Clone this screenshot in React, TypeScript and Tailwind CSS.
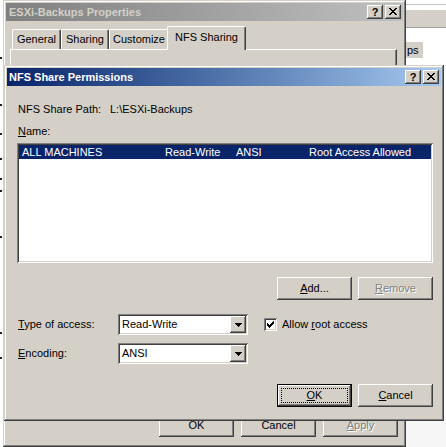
import React from "react";

// Classic 3D bevels
const raised =
  "shadow-[inset_-1px_-1px_#404040,inset_1px_1px_#ffffff,inset_-2px_-2px_#808080,inset_2px_2px_#d4d0c8]";
const frame =
  "shadow-[inset_-1px_-1px_#404040,inset_1px_1px_#d4d0c8,inset_-2px_-2px_#808080,inset_2px_2px_#ffffff]";
const sunken =
  "shadow-[inset_1px_1px_#808080,inset_-1px_-1px_#ffffff,inset_2px_2px_#404040,inset_-2px_-2px_#d4d0c8]";

function CloseGlyph() {
  return (
    <svg width="8" height="7" viewBox="0 0 8 7" shapeRendering="crispEdges">
      <path
        fill="#000"
        d="M0 0h2v1H0z M6 0h2v1H6z M1 1h2v1H1z M5 1h2v1H5z M2 2h4v1H2z M3 3h2v1H3z M2 4h4v1H2z M1 5h2v1H1z M5 5h2v1H5z M0 6h2v1H0z M6 6h2v1H6z"
      />
    </svg>
  );
}

function CaptionButtons() {
  return (
    <div className="ml-auto flex gap-[2px]">
      <div className={`w-[16px] h-[14px] bg-[#d4d0c8] ${raised} flex items-center justify-center`}>
        <span className="text-black font-bold text-[11px] leading-none">?</span>
      </div>
      <div className={`w-[16px] h-[14px] bg-[#d4d0c8] ${raised} flex items-center justify-center pb-px`}>
        <CloseGlyph />
      </div>
    </div>
  );
}

function Button({
  children,
  isDefault = false,
  disabled = false,
}: {
  children: React.ReactNode;
  isDefault?: boolean;
  disabled?: boolean;
}) {
  const label = (
    <span
      className={
        disabled
          ? "text-[#808080] [text-shadow:1px_1px_0_#ffffff]"
          : "text-black"
      }
    >
      {children}
    </span>
  );
  if (isDefault) {
    return (
      <div className="w-[75px] h-[23px] border border-black">
        <div className={`w-full h-full bg-[#d4d0c8] ${raised} p-[3px]`}>
          <div className="w-full h-full border border-dotted border-black flex items-center justify-center">
            {label}
          </div>
        </div>
      </div>
    );
  }
  return (
    <div className={`w-[75px] h-[23px] bg-[#d4d0c8] ${raised} flex items-center justify-center`}>
      {label}
    </div>
  );
}

function ComboBox({ value }: { value: string }) {
  return (
    <div className={`w-[130px] h-[21px] bg-white ${sunken} p-[2px] flex`}>
      <div className="flex-1 pl-[2px] flex items-center">{value}</div>
      <div className={`w-[16px] h-full bg-[#d4d0c8] ${raised} flex items-center justify-center`}>
        <svg width="7" height="4" viewBox="0 0 7 4" shapeRendering="crispEdges">
          <path fill="#000" d="M0 0h7v1H0z M1 1h5v1H1z M2 2h3v1H2z M3 3h1v1H3z" />
        </svg>
      </div>
    </div>
  );
}

function CheckBox() {
  return (
    <div className={`w-[13px] h-[13px] bg-white ${sunken} flex items-center justify-center`}>
      <svg width="7" height="7" viewBox="0 0 7 7" shapeRendering="crispEdges">
        <path
          fill="#000"
          d="M0 2h1v3H0z M1 3h1v3H1z M2 4h1v3H2z M3 3h1v3H3z M4 2h1v3H4z M5 1h1v3H5z M6 0h1v3H6z"
        />
      </svg>
    </div>
  );
}

function Tab({ label, w, selected = false }: { label: string; w: string; selected?: boolean }) {
  if (selected) {
    return (
      <div
        className={`${w} relative z-10 -mx-[2px] -mb-px h-[24px] bg-[#d4d0c8] border-l border-t border-white border-r border-r-[#404040] rounded-t-[2px] shadow-[inset_-1px_0_#808080] flex items-start justify-center pt-[4px]`}
      >
        {label}
      </div>
    );
  }
  return (
    <div
      className={`${w} h-[20px] bg-[#d4d0c8] border-l border-t border-white border-r border-r-[#404040] rounded-t-[2px] shadow-[inset_-1px_0_#808080] flex items-start justify-center pt-[3px]`}
    >
      {label}
    </div>
  );
}

function DesktopBits() {
  const specks = [57, 104, 133, 158, 178, 190, 236, 332, 357];
  return (
    <>
      {specks.map((y) => (
        <div key={y} className="absolute left-0 w-[2px] h-[2px] bg-[#202020]" style={{ top: y }} />
      ))}
      {/* window peeking out at the right */}
      <div className="absolute left-[406px] top-[4px] w-[40px] h-px bg-[#c4c4c4]" />
      <div className="absolute left-[406px] top-[9px] w-[40px] h-[19px] bg-[#d4d0c8] border-t border-white border-b border-b-[#a0a0a0]" />
      <div className="absolute left-[406px] top-[42px] w-[17px] h-[16px] bg-[#d4d0c8] pl-px leading-[16px]">
        ps
      </div>
      <div className="absolute left-[406px] top-[421px] w-[40px] h-[26px] bg-[#f6f6f6]" />
    </>
  );
}

function PropertiesWindow() {
  return (
    <div className={`absolute left-[3px] top-0 w-[403px] h-[447px] bg-[#d4d0c8] ${frame} p-[3px] flex flex-col`}>
      <div className="h-[18px] bg-linear-to-r from-[#808080] to-[#c0c0c0] flex items-center pl-[3px] pr-[2px]">
        <span className="font-bold text-[#d4d0c8]">ESXi-Backups Properties</span>
        <CaptionButtons />
      </div>
      <div className="mt-[5px] h-[23px] flex items-end pl-[6px]">
        <Tab label="General" w="w-[49px]" />
        <Tab label="Sharing" w="w-[48px]" />
        <Tab label="Customize" w="w-[60px]" />
        <Tab label="NFS Sharing" w="w-[79px]" selected />
      </div>
      <div className="flex-1 ml-[4px] mr-[6px] border-l border-t border-white border-r border-r-[#404040] shadow-[inset_-1px_0_#808080] relative">
        <div className="absolute left-[23px] top-[15px] w-[7px] h-px bg-[#606060]" />
      </div>
      <div className="mt-[7px] mb-[7px] flex justify-end gap-[7px] pr-[5px]">
        <Button>OK</Button>
        <Button>Cancel</Button>
        <Button disabled>
          <u>A</u>pply
        </Button>
      </div>
    </div>
  );
}

function NfsDialog() {
  return (
    <div className={`absolute left-[4px] top-[65px] w-[440px] h-[356px] bg-[#d4d0c8] ${frame} p-[3px] flex flex-col`}>
      <div className="h-[18px] bg-linear-to-r from-[#0a246a] to-[#a6caf0] flex items-center pl-[2px] pr-[2px]">
        <span className="font-bold text-white">NFS Share Permissions</span>
        <CaptionButtons />
      </div>

      <div className="flex flex-col pl-[11px] pr-[8px] pt-[17px]">
        <div className="flex h-[13px]">
          <span className="w-[92px]">NFS Share Path:</span>
          <span>L:\ESXi-Backups</span>
        </div>

        <div className="mt-[9px] h-[13px]">
          <u>N</u>ame:
        </div>

        <div className={`mt-[5px] -ml-px h-[120px] bg-white ${sunken} p-[2px]`}>
          <div className="h-[14px] bg-[#0a246a] text-white flex items-center">
            <span className="w-[146px] pl-[3px]">ALL MACHINES</span>
            <span className="w-[71px]">Read-Write</span>
            <span className="w-[73px]">ANSI</span>
            <span>Root Access Allowed</span>
          </div>
        </div>

        <div className="mt-[14px] flex justify-end gap-[6px]">
          <Button>
            <u>A</u>dd...
          </Button>
          <Button disabled>
            <u>R</u>emove
          </Button>
        </div>

        <div className="mt-[14px] flex items-center h-[21px]">
          <span className="w-[100px]">
            <u>T</u>ype of access:
          </span>
          <ComboBox value="Read-Write" />
          <div className="ml-[16px] flex items-center gap-[5px]">
            <CheckBox />
            <span>
              Allow <u>r</u>oot access
            </span>
          </div>
        </div>

        <div className="mt-[8px] flex items-center h-[21px]">
          <span className="w-[100px]">
            <u>E</u>ncoding:
          </span>
          <ComboBox value="ANSI" />
        </div>

        <div className="mt-[20px] flex justify-end gap-[6px]">
          <Button isDefault>
            <u>O</u>K
          </Button>
          <Button>
            <u>C</u>ancel
          </Button>
        </div>
      </div>
    </div>
  );
}

export default function App() {
  return (
    <div className="relative w-[446px] h-[447px] overflow-hidden bg-white font-['Liberation_Sans',Arial,sans-serif] text-[11px] leading-[13px] text-black select-none">
      <DesktopBits />
      <PropertiesWindow />
      <NfsDialog />
    </div>
  );
}
